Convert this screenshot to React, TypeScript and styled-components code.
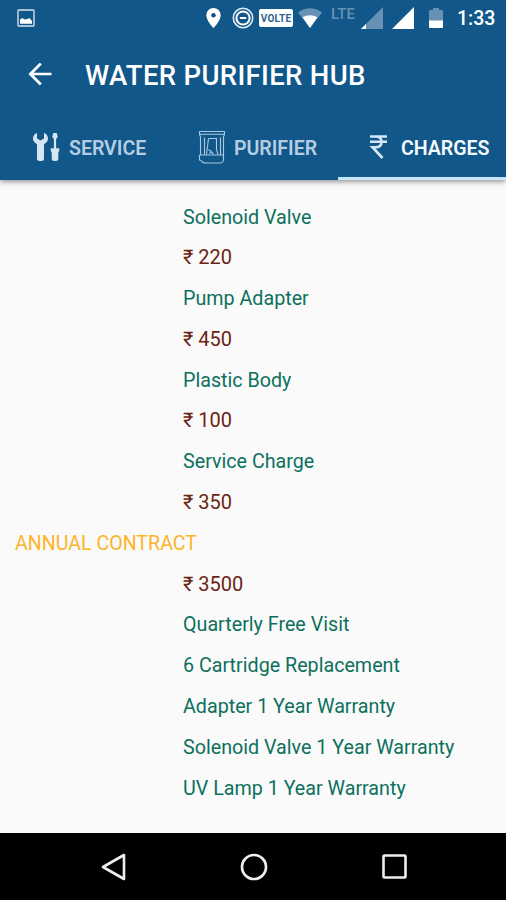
import React from "react";
import styled, { createGlobalStyle } from "styled-components";

const GlobalStyle = createGlobalStyle`
  * { box-sizing: border-box; }
  body { margin: 0; font-family: Roboto, "Liberation Sans", sans-serif; }
  svg { display: block; flex: none; }
`;

const Screen = styled.div`
  width: 506px;
  height: 900px;
  display: flex;
  flex-direction: column;
  overflow: hidden;
  background: #fafafa;
`;

const Header = styled.header`
  flex: none;
  height: 180px;
  display: flex;
  flex-direction: column;
  background: #115789;
  box-shadow: 0 1px 6px rgba(0, 0, 0, 0.5);
`;

const StatusBar = styled.div`
  height: 36px;
  display: flex;
  align-items: center;
  padding: 0 11px 0 17px;
`;

const StatusIcons = styled.div`
  display: flex;
  align-items: center;
  margin-left: auto;
`;

const StatusSlot = styled.div<{ $gap: number }>`
  margin-right: ${(p) => p.$gap}px;
`;

const Volte = styled.div`
  width: 34px;
  height: 18px;
  border-radius: 2px;
  background: #fff;
  color: #2a6592;
  font-size: 10px;
  font-weight: 700;
  letter-spacing: 0.2px;
  line-height: 19px;
  text-align: center;
`;

const Lte = styled.div`
  width: 24px;
  height: 24px;
  color: #6792b5;
  font-size: 15px;
  font-weight: 500;
  line-height: 17px;
`;

const Clock = styled.div`
  width: 38px;
  padding-top: 2px;
  color: #fff;
  font-size: 19.5px;
  font-weight: 500;
  line-height: 34px;
  white-space: nowrap;
`;

const AppBar = styled.div`
  height: 78px;
  display: flex;
  align-items: center;
  gap: 33px;
  padding-left: 28px;
`;

const Title = styled.h1`
  margin: 0;
  padding-top: 1px;
  color: #fff;
  font-size: 27.5px;
  font-weight: 500;
  letter-spacing: 0.33px;
  line-height: 78px;
  white-space: nowrap;
`;

const Tabs = styled.nav`
  height: 66px;
  display: grid;
  grid-template-columns: 169px 169px 168px;
`;

const Tab = styled.div<{ $active?: boolean; $left: number; $gap: number }>`
  display: flex;
  align-items: center;
  gap: ${(p) => p.$gap}px;
  padding-left: ${(p) => p.$left}px;
  padding-top: ${(p) => (p.$active ? 3 : 0)}px;
  border-bottom: ${(p) => (p.$active ? "3px solid #c5e5f8" : "none")};
  color: ${(p) => (p.$active ? "#f4faff" : "#b5cde2")};
  font-size: 19.6px;
  font-weight: 600;
  letter-spacing: -0.05px;
  white-space: nowrap;
`;

const TabLabel = styled.span`
  padding-top: 3px;
`;

const List = styled.main`
  flex: 1;
  padding-top: 16.5px;
`;

const FONT_SIZES = { item: 19.7, price: 20, heading: 19.6 };
const COLORS = { item: "#0d705d", price: "#6a2413", heading: "#fcb52b" };

const Row = styled.div<{ $kind: "item" | "price" | "heading" }>`
  height: 40.8px;
  line-height: ${(p) => (p.$kind === "price" ? 40.8 : 42.4)}px;
  padding-left: ${(p) => (p.$kind === "heading" ? 15 : 183)}px;
  color: ${(p) => COLORS[p.$kind]};
  font-size: ${(p) => FONT_SIZES[p.$kind]}px;
  white-space: nowrap;
`;

const NavBar = styled.footer`
  flex: none;
  height: 67px;
  display: flex;
  align-items: center;
  justify-content: space-between;
  padding: 0 99px 0 101px;
  background: #000;
`;

const ROWS: { kind: "item" | "price" | "heading"; text: string }[] = [
  { kind: "item", text: "Solenoid Valve" },
  { kind: "price", text: "₹ 220" },
  { kind: "item", text: "Pump Adapter" },
  { kind: "price", text: "₹ 450" },
  { kind: "item", text: "Plastic Body" },
  { kind: "price", text: "₹ 100" },
  { kind: "item", text: "Service Charge" },
  { kind: "price", text: "₹ 350" },
  { kind: "heading", text: "ANNUAL CONTRACT" },
  { kind: "price", text: "₹ 3500" },
  { kind: "item", text: "Quarterly Free Visit" },
  { kind: "item", text: "6 Cartridge Replacement" },
  { kind: "item", text: "Adapter 1 Year Warranty" },
  { kind: "item", text: "Solenoid Valve 1 Year Warranty" },
  { kind: "item", text: "UV Lamp 1 Year Warranty" },
];

const PictureIcon = () => (
  <svg width="18" height="18" viewBox="0 0 18 18">
    <rect x="1" y="1" width="16" height="16" rx="1" fill="none" stroke="#a9c1d6" strokeWidth="1.800" />
    <path d="M3 14.800V10.500l2.500-1.500L7.500 10.500l3-.5 2-1 2.500 3v2.800z" fill="#fff" />
  </svg>
);

const PinIcon = () => (
  <svg width="15" height="20" viewBox="0 0 15 20">
    <path
      d="M7.500 0A7.200 7.200 0 0 0 .3 7.200C.3 12.500 7.500 20 7.500 20s7.200-7.500 7.200-12.800A7.200 7.200 0 0 0 7.500 0z"
      fill="#fff"
    />
    <circle cx="7.500" cy="7.300" r="2.200" fill="#174a86" />
  </svg>
);

const PriorityIcon = () => (
  <svg width="22" height="22" viewBox="0 0 22 22">
    <circle cx="11" cy="11" r="9.700" fill="none" stroke="#dfebf5" strokeWidth="1.600" />
    <circle cx="11" cy="11" r="6.600" fill="none" stroke="#fff" strokeWidth="2" />
    <path d="M7.800 11h6.400" stroke="#fff" strokeWidth="2" />
  </svg>
);

const WifiIcon = () => (
  <svg width="24" height="20" viewBox="0 0 24 20">
    <path d="M0 4.500C7-1.200 17-1.200 24 4.500L12 20z" fill="#6792b5" />
    <path d="M4.600 9.300c4.200-2.800 10.600-2.800 14.800 0L12 20z" fill="#fff" />
  </svg>
);

const SignalIcon = ({ full }: { full?: boolean }) => (
  <svg width="22" height="22" viewBox="0 0 22 22">
    <path d="M22 0v22H0z" fill={full ? "#fff" : "#6792b5"} />
    {!full && <path d="M5 17v5H0z" fill="#fff" />}
  </svg>
);

const BatteryIcon = () => (
  <svg width="14" height="20" viewBox="0 0 14 20">
    <path d="M4 0h6v2h3a1 1 0 0 1 1 1v10H0V3a1 1 0 0 1 1-1h3z" fill="#6792b5" />
    <path d="M0 12.500h14V19a1 1 0 0 1-1 1H1a1 1 0 0 1-1-1z" fill="#fff" />
  </svg>
);

const BackIcon = () => (
  <svg width="24" height="24" viewBox="0 0 24 24">
    <path d="M23.500 11H3M12.800 .5 2.300 11l10.500 10.500" fill="none" stroke="#fff" strokeWidth="2.700" />
  </svg>
);

const ToolsIcon = () => (
  <svg width="28" height="30" viewBox="0 0 28 30">
    <path
      d="M4 1v5.500l3.500 2 3.500-2V1c2.300.8 4 3 4 5.600 0 2.600-1.500 4.400-4 5.600v14.300a2.500 2.500 0 0 1-2.500 2.500h-2A2.500 2.500 0 0 1 4 26.500V12.200C1.500 11 0 9.200 0 6.600 0 4 1.700 1.800 4 1z"
      fill="#d5e5f4"
    />
    <path
      d="M20.300 1h3.400l1.100 4-1.700 2v9.200h3.200v2.800l-1 1.200v6.300a2.500 2.500 0 0 1-2.500 2.500h-1.600a2.500 2.500 0 0 1-2.500-2.500v-6.300l-1-1.200v-2.800h3.200V7l-1.700-2z"
      fill="#d5e5f4"
    />
  </svg>
);

const PurifierIcon = () => (
  <svg width="28" height="34" viewBox="0 0 28 34" fill="none" stroke="#a9c8e2" strokeWidth="1.100">
    <path d="M1.500 1.500h25v2.700h-25zM1.500 4.200l1 3V25M26.500 4.200l-1 3V25" />
    <path d="M1.500 25v5c2.500 0 2 3 5.500 3h15c3 0 3-1 3.500-3v-5M1.500 25h24" />
    <path d="M10.500 8.500h8v11l1.500 5M10.500 8.500 8.500 24.500M10.500 19.500l2.500 2-1.500 2.500M13 21.500l2.500 2.500M6.500 7.500V25M22.500 7.500V25" />
  </svg>
);

const RupeeIcon = () => (
  <svg width="19" height="24" viewBox="0 0 19 24" fill="none" stroke="#d7e7f8" strokeWidth="2.600">
    <path d="M1 1.500h17M1 6.700h17M1 1.500h5.500c4 0 6 1.800 6 5.200 0 3.600-2.300 5.500-6 5.500H3.500l10 10.800" />
  </svg>
);

const NavBack = () => (
  <svg width="25" height="28" viewBox="0 0 25 28">
    <path d="M23 2v24L2 14z" fill="none" stroke="#eee" strokeWidth="2.600" strokeLinejoin="round" />
  </svg>
);

const NavHome = () => (
  <svg width="28" height="28" viewBox="0 0 28 28">
    <circle cx="14" cy="14" r="12" fill="none" stroke="#eee" strokeWidth="2.700" />
  </svg>
);

const NavRecent = () => (
  <svg width="25" height="25" viewBox="0 0 25 25">
    <rect x="1.500" y="1.500" width="22" height="22" rx="1" fill="none" stroke="#eee" strokeWidth="2.600" />
  </svg>
);

export default function App() {
  return (
    <Screen>
      <GlobalStyle />
      <Header>
        <StatusBar>
          <PictureIcon />
          <StatusIcons>
            <StatusSlot $gap={11}><PinIcon /></StatusSlot>
            <StatusSlot $gap={5}><PriorityIcon /></StatusSlot>
            <StatusSlot $gap={5}><Volte>VOLTE</Volte></StatusSlot>
            <StatusSlot $gap={9}><WifiIcon /></StatusSlot>
            <StatusSlot $gap={6}><Lte>LTE</Lte></StatusSlot>
            <StatusSlot $gap={9}><SignalIcon /></StatusSlot>
            <StatusSlot $gap={15}><SignalIcon full /></StatusSlot>
            <StatusSlot $gap={14}><BatteryIcon /></StatusSlot>
            <Clock>1:33</Clock>
          </StatusIcons>
        </StatusBar>
        <AppBar>
          <BackIcon />
          <Title>WATER PURIFIER HUB</Title>
        </AppBar>
        <Tabs>
          <Tab $left={33} $gap={8}><ToolsIcon /><TabLabel>SERVICE</TabLabel></Tab>
          <Tab $left={29} $gap={8}><PurifierIcon /><TabLabel>PURIFIER</TabLabel></Tab>
          <Tab $active $left={31} $gap={13}><RupeeIcon /><TabLabel>CHARGES</TabLabel></Tab>
        </Tabs>
      </Header>
      <List>
        {ROWS.map((row) => (
          <Row key={row.text} $kind={row.kind}>{row.text}</Row>
        ))}
      </List>
      <NavBar>
        <NavBack />
        <NavHome />
        <NavRecent />
      </NavBar>
    </Screen>
  );
}
